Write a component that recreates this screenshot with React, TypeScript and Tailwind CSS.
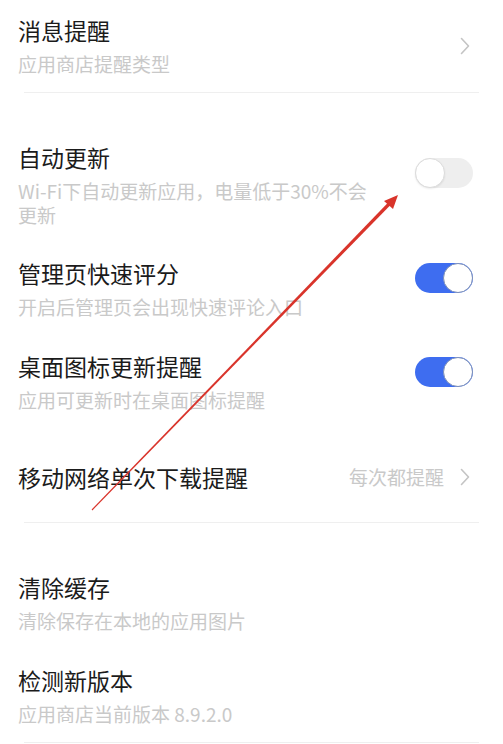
import React from "react";

const FONT = { fontFamily: '"Noto Sans CJK SC", "Noto Sans", sans-serif' };

function Chevron() {
  return (
    <svg width="10" height="18" viewBox="0 0 10 18" className="shrink-0">
      <path d="M1.5 1.5 L8.5 9 L1.5 16.5" fill="none" stroke="#c4c4c4" strokeWidth="1.6" strokeLinecap="round" strokeLinejoin="round" />
    </svg>
  );
}

function Toggle({ on }: { on: boolean }) {
  if (on) {
    return (
      <div className="relative h-[30px] w-[58px] shrink-0 rounded-full bg-[#3e6df0]">
        <div className="absolute right-0 top-0 h-[30px] w-[30px] rounded-full border-[1.5px] border-[#7c8fb8] bg-white" />
      </div>
    );
  }
  return (
    <div className="relative h-[30px] w-[58px] shrink-0 rounded-full bg-[#eeeeee]">
      <div className="absolute left-0 top-0 h-[30px] w-[30px] rounded-full border border-[#dcdcdc] bg-white shadow-[0_1px_2px_rgba(0,0,0,0.08)]" />
    </div>
  );
}

function Title({ children }: { children: React.ReactNode }) {
  return <div className="text-[23px] leading-[30px] text-[#1b1b1b]">{children}</div>;
}

function Sub({ children }: { children: React.ReactNode }) {
  return <div className="mt-[7px] text-[19px] leading-[24px] text-[#c9c9c9]">{children}</div>;
}

function Divider() {
  return <div className="mx-[24px] h-px bg-[#efefef]" />;
}

export default function App() {
  return (
    <div className="relative h-[744px] w-[503px] overflow-hidden bg-white" style={FONT}>
      {/* 消息提醒 */}
      <div className="flex items-center justify-between pb-4 pl-[18px] pr-[33px] pt-[15px]">
        <div>
          <Title>消息提醒</Title>
          <Sub>应用商店提醒类型</Sub>
        </div>
        <Chevron />
      </div>
      <Divider />

      <div className="h-[33px]" />

      {/* 自动更新 */}
      <div className="flex items-start justify-between pb-[15px] pl-[18px] pr-[30px] pt-4">
        <div className="w-[352px]">
          <Title>自动更新</Title>
          <Sub>Wi-Fi下自动更新应用，电量低于30%不会更新</Sub>
        </div>
        <div className="mt-4">
          <Toggle on={false} />
        </div>
      </div>

      {/* 管理页快速评分 */}
      <div className="flex items-start justify-between py-4 pl-[18px] pr-[30px]">
        <div>
          <Title>管理页快速评分</Title>
          <Sub>开启后管理页会出现快速评论入口</Sub>
        </div>
        <div className="mt-[5px]">
          <Toggle on />
        </div>
      </div>

      {/* 桌面图标更新提醒 */}
      <div className="flex items-start justify-between py-4 pl-[18px] pr-[30px]">
        <div>
          <Title>桌面图标更新提醒</Title>
          <Sub>应用可更新时在桌面图标提醒</Sub>
        </div>
        <div className="mt-[6px]">
          <Toggle on />
        </div>
      </div>

      {/* 移动网络单次下载提醒 */}
      <div className="flex h-[94px] items-center justify-between pl-[18px] pr-[33px] pt-[4px]">
        <Title>移动网络单次下载提醒</Title>
        <div className="flex items-center gap-[16px]">
          <span className="text-[19px] leading-[24px] text-[#c9c9c9]">每次都提醒</span>
          <Chevron />
        </div>
      </div>
      <Divider />

      <div className="h-[33px]" />

      {/* 清除缓存 */}
      <div className="py-4 pl-[18px] pr-[30px]">
        <Title>清除缓存</Title>
        <Sub>清除保存在本地的应用图片</Sub>
      </div>

      {/* 检测新版本 */}
      <div className="py-4 pl-[18px] pr-[30px]">
        <Title>检测新版本</Title>
        <Sub>应用商店当前版本 8.9.2.0</Sub>
      </div>
      <Divider />

      {/* red annotation arrow */}
      <svg className="pointer-events-none absolute left-0 top-0" width="503" height="744" viewBox="0 0 503 744">
        <polygon points="91.6,509.6 92.4,510.4 393.2,202.2 390.8,199.8" fill="#d9342b" />
        <polygon points="398,195 384,201 393,209" fill="#d9342b" />
      </svg>
    </div>
  );
}
